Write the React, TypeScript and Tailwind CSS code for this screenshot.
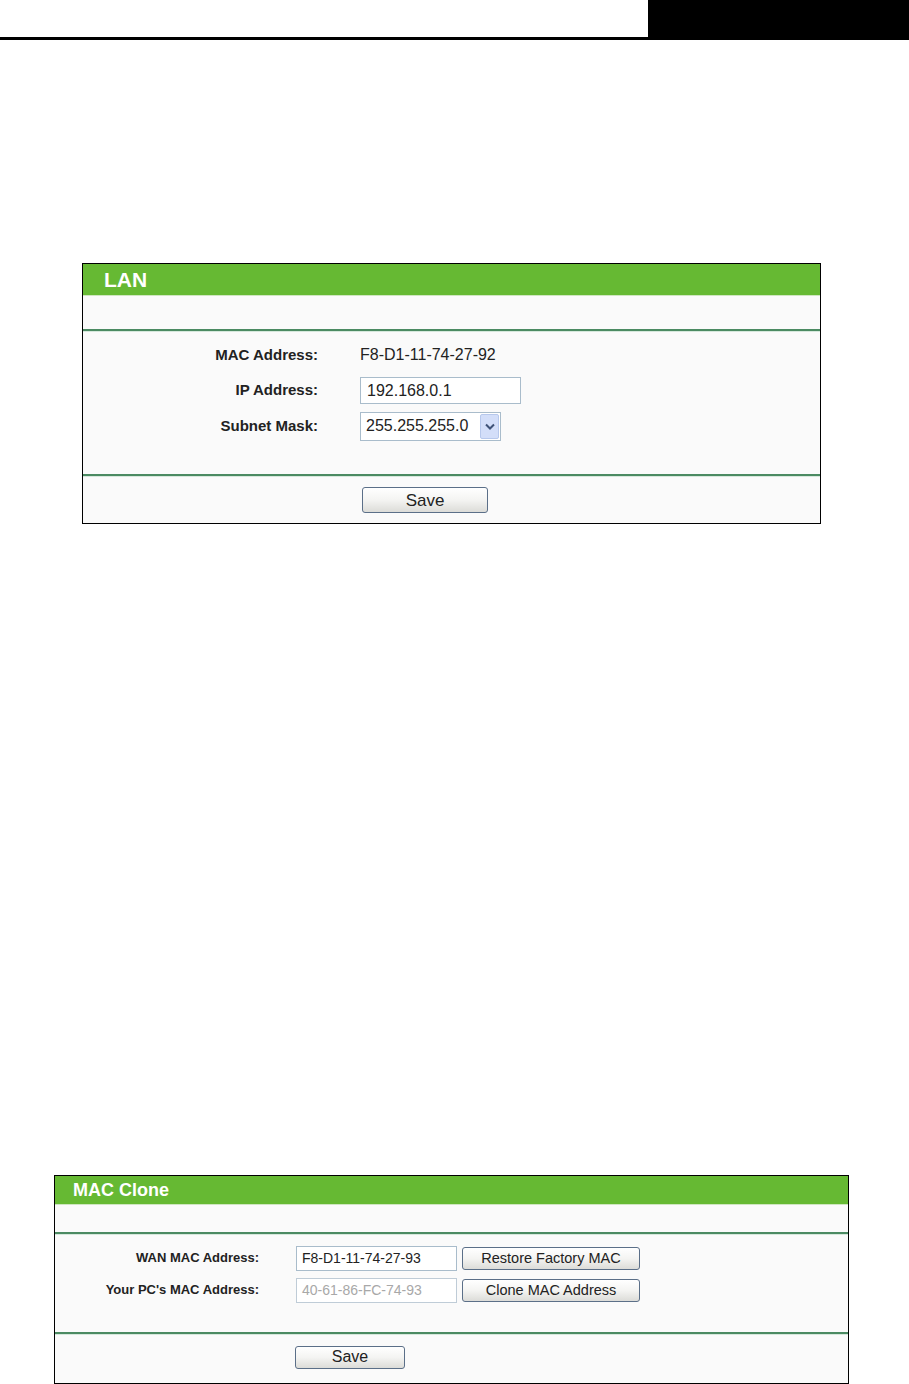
import React from 'react';

const font = { fontFamily: '"Liberation Sans", Arial, sans-serif' };

const Separator: React.FC = () => (
  <div>
    <div className="h-[2px] bg-[#4b8a62]"></div>
    <div className="h-px bg-[#d6e8dc]"></div>
  </div>
);

const Chevron: React.FC = () => (
  <svg width="10" height="7" viewBox="0 0 10 7">
    <path d="M1 1.5 L5 5.5 L9 1.5" fill="none" stroke="#3f5277" strokeWidth="2" />
  </svg>
);

const Button: React.FC<{ className?: string; children: React.ReactNode }> = ({ className = '', children }) => (
  <button
    type="button"
    className={`rounded-[3px] border border-[#5b6f88] bg-gradient-to-b from-white via-[#f4f4f2] to-[#dcdcd8] text-[#222] ${className}`}
  >
    {children}
  </button>
);

export default function App() {
  return (
    <div className="h-[1384px] w-[909px] overflow-hidden bg-white" style={font}>
      {/* top rule */}
      <div className="flex h-[40px]">
        <div className="flex-1 border-b-[3px] border-black"></div>
        <div className="w-[261px] bg-black"></div>
      </div>

      {/* LAN */}
      <div className="ml-[82px] mt-[223px] w-[739px] border border-black bg-[#fafafa]">
        <div className="flex h-[31px] items-center bg-[#66b933] pl-[21px] text-[21px] font-bold text-white">LAN</div>
        <div className="h-px bg-[#cfe6c0]"></div>
        <div className="h-[33px]"></div>
        <Separator />
        <div className="grid grid-cols-[235px_1fr] gap-x-[42px] pb-[30px] pt-[5px]">
          <div className="flex h-[36px] items-center justify-end text-[15px] font-bold text-[#222]">MAC Address:</div>
          <div className="flex h-[36px] items-center text-[16px] text-[#222]">F8-D1-11-74-27-92</div>

          <div className="flex h-[35px] items-center justify-end text-[15px] font-bold text-[#222]">IP Address:</div>
          <div className="flex h-[35px] items-center">
            <div className="flex h-[27px] w-[161px] items-center border border-[#a9bccb] bg-white pl-[6px] text-[16px] text-[#222]">
              192.168.0.1
            </div>
          </div>

          <div className="flex h-[36px] items-center justify-end text-[15px] font-bold text-[#222]">Subnet Mask:</div>
          <div className="flex h-[36px] items-center">
            <div className="flex h-[29px] w-[141px] items-center justify-between border border-[#a9bccb] bg-white pl-[5px] pr-[1px] text-[16px] text-[#222]">
              <span>255.255.255.0</span>
              <span className="flex h-[25px] w-[19px] items-center justify-center rounded-[2px] border border-[#b7c8ec] bg-[#d3def9]">
                <Chevron />
              </span>
            </div>
          </div>
        </div>
        <Separator />
        <div className="grid grid-cols-[235px_1fr] gap-x-[42px] pb-[10px] pt-[10px]">
          <div></div>
          <div>
            <Button className="ml-[2px] h-[26px] w-[126px] text-[17px] leading-none">Save</Button>
          </div>
        </div>
      </div>

      {/* MAC Clone */}
      <div className="ml-[54px] mt-[651px] w-[795px] border border-black bg-[#fafafa]">
        <div className="flex h-[28px] items-center bg-[#66b933] pl-[18px] text-[18px] font-bold text-white">MAC Clone</div>
        <div className="h-px bg-[#cfe6c0]"></div>
        <div className="h-[27px]"></div>
        <Separator />
        <div className="grid grid-cols-[204px_1fr] gap-x-[37px] pb-[26px] pt-[7px]">
          <div className="flex h-[32px] items-center justify-end text-[13px] font-bold text-[#222]">WAN MAC Address:</div>
          <div className="flex h-[32px] items-center gap-[5px]">
            <div className="flex h-[25px] w-[161px] items-center border border-[#a9bccb] bg-white pl-[5px] text-[14px] text-[#222]">
              F8-D1-11-74-27-93
            </div>
            <Button className="h-[23px] w-[178px] text-[14.5px] leading-none">Restore Factory MAC</Button>
          </div>

          <div className="flex h-[32px] items-center justify-end text-[13px] font-bold text-[#222]">Your PC's MAC Address:</div>
          <div className="flex h-[32px] items-center gap-[5px]">
            <div className="flex h-[25px] w-[161px] items-center border border-[#bfccd7] bg-white pl-[5px] text-[14px] text-[#a8a8a8]">
              40-61-86-FC-74-93
            </div>
            <Button className="h-[23px] w-[178px] text-[14.5px] leading-none">Clone MAC Address</Button>
          </div>
        </div>
        <Separator />
        <div className="grid grid-cols-[204px_1fr] gap-x-[36px] pb-[14px] pt-[10px]">
          <div></div>
          <div>
            <Button className="h-[23px] w-[110px] text-[16px] leading-none">Save</Button>
          </div>
        </div>
      </div>
    </div>
  );
}
